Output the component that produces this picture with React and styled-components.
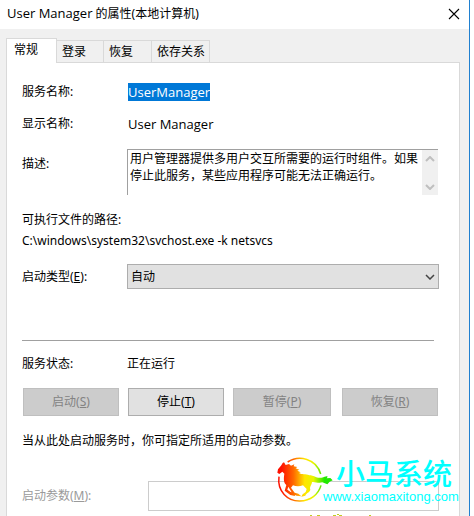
import React, { useState } from 'react'
import styled, { createGlobalStyle } from 'styled-components'

const GlobalStyle = createGlobalStyle`
  * {
    box-sizing: border-box;
  }
  body {
    margin: 0;
    background: #fff;
    overflow: hidden;
  }
  body, button, input, select, textarea {
    font-family: 'Noto Sans', 'Noto Sans CJK SC', sans-serif;
    font-size: 12px;
    line-height: 18px;
    color: #000;
  }
`
const Dialog = styled.main`
  display: flex;
  flex-direction: column;
  height: 100vh;
  margin-right: 4px;
  overflow: hidden;
  background: #f0f0f0;
  border-right: 1px solid #2080d0;
`
const TitleBar = styled.header`
  display: flex;
  justify-content: space-between;
  align-items: center;
  height: 29px;
  flex: none;
  padding: 0 9px 2px 7px;
  background: #fff;
`
const Title = styled.h1`
  margin: 0;
  font-size: 12px;
  line-height: 18px;
  font-weight: 400;
`
const CloseButton = styled.button`
  display: flex;
  padding: 0;
  border: none;
  background: none;
`
const TabList = styled.nav`
  display: flex;
  align-items: flex-end;
  height: 33px;
  flex: none;
  padding-left: 6px;
`
const Tab = styled.button`
  position: relative;
  flex: none;
  width: ${(props) => props.$width}px;
  height: ${(props) => (props.$active ? 25 : 22)}px;
  margin: 0 0 ${(props) => (props.$active ? -1 : 0)}px;
  padding: ${(props) => (props.$active ? '0 0 2px 7px' : '1px 0 0 5px')};
  text-align: left;
  white-space: nowrap;
  background: ${(props) => (props.$active ? '#fff' : '#f0f0f0')};
  border: 1px solid #d9d9d9;
  border-bottom: none;
  border-left-width: ${(props) => (props.$active ? 1 : 0)}px;
`
const Panel = styled.section`
  flex: 1;
  margin: 0 9px 0 6px;
  padding: 20px 20px 0 15px;
  background: #fff;
  border: 1px solid #d9d9d9;
  border-bottom: none;
`
const Row = styled.div`
  display: grid;
  grid-template-columns: 105px 1fr;
  align-items: center;
  margin-bottom: ${(props) => props.$gap || 0}px;
`
const Label = styled.label`
  color: ${(props) => (props.$disabled ? '#9a9a9a' : '#000')};
`
const DescriptionLabel = styled(Label)`
  align-self: start;
  padding-top: 6px;
`
const Latin = styled.span`
  font-family: 'Open Sans', sans-serif;
  font-size: 13px;
`
const Value = styled(Latin)`
  padding-left: 1px;
`
const Selected = styled.mark`
  color: #fff;
  background: #0078d7;
`
const Description = styled.div`
  display: flex;
  height: 46px;
  margin-right: 1px;
  border-top: 1px solid #a0a0a0;
  border-left: 1px solid #a0a0a0;
`
const DescriptionText = styled.textarea`
  flex: 1;
  min-width: 0;
  padding: 0 0 0 2px;
  border: none;
  outline: none;
  resize: none;
  overflow: hidden;
  line-height: 17px;
`
const ScrollBar = styled.div`
  display: flex;
  flex-direction: column;
  justify-content: space-between;
  align-items: center;
  width: 16px;
  padding: 6px 0 5px;
  background: #f0f0f0;
`
const PathBlock = styled.div`
  margin-bottom: 13px;
`
const PathLine = styled.p`
  margin: 0;
  line-height: 21px;
`
const SelectWrapper = styled.div`
  position: relative;
`
const StyledSelect = styled.select`
  display: block;
  width: 100%;
  height: 25px;
  padding: 0 3px;
  appearance: none;
  background: #e1e1e1;
  border: 1px solid #adadad;
  border-radius: 0;
`
const SelectArrow = styled.span`
  position: absolute;
  top: 10px;
  right: 4px;
  display: flex;
  pointer-events: none;
`
const Separator = styled.hr`
  margin: 51px 5px 14px 0;
  border: none;
  border-top: 1px solid #a0a0a0;
`
const ButtonRow = styled.div`
  display: flex;
  gap: 9px;
  padding: 0 1px;
  margin-bottom: 16px;
`
const ActionButton = styled.button`
  width: 96px;
  height: 28px;
  padding: 0;
  color: #000;
  background: #e1e1e1;
  border: 1px solid #adadad;

  &:disabled {
    color: #838383;
    background: #ccc;
    border-color: #bfbfbf;
  }

  &:nth-child(3) {
    width: 98px;
  }

  &:last-child {
    margin-left: auto;
  }
`
const Hint = styled.p`
  margin: 0 0 31px;
`
const ParamRow = styled.div`
  display: grid;
  grid-template-columns: 126px 1fr;
  align-items: center;
`
const ParamInput = styled.input`
  width: 100%;
  height: 30px;
  border: 1px solid #ccc;
  background: #fff;
`
const Watermark = styled.aside`
  position: absolute;
  right: 9px;
  bottom: 0;
  display: flex;
  width: 190px;
  height: 60px;
  pointer-events: none;
`
const HorseLogo = styled.svg`
  flex: none;
  margin-top: 1px;
`
const WatermarkText = styled.div`
  display: flex;
  flex-direction: column;
  margin-left: -10px;
  white-space: nowrap;
  color: #00ffff;
`
const Brand = styled.span`
  padding-left: 13px;
  font-family: 'Noto Sans CJK SC', sans-serif;
  font-size: 29px;
  font-weight: 500;
  line-height: 32px;
`
const SiteName = styled.span`
  font-family: 'Liberation Sans', sans-serif;
  font-size: 13px;
  line-height: 18px;
`
const CutMark = styled.svg`
  position: absolute;
  left: 34px;
  bottom: 0;
`

const tabs = [
  { id: 'general', title: '常规', width: 51 },
  { id: 'logon', title: '登录', width: 47 },
  { id: 'recovery', title: '恢复', width: 48 },
  { id: 'dependencies', title: '依存关系', width: 58 },
]

const actions = [
  { key: 'S', title: '启动', disabled: true },
  { key: 'T', title: '停止', disabled: false },
  { key: 'P', title: '暂停', disabled: true },
  { key: 'R', title: '恢复', disabled: true },
]

function Chevron({ up, color, width = 1.5 }) {
  return (
    <svg width="10" height="6" viewBox="0 0 10 6" fill="none" stroke={color} strokeWidth={width}>
      <path d={up ? 'M1 5L5 1L9 5' : 'M1 1L5 5L9 1'} />
    </svg>
  )
}

function Horse() {
  return (
    <HorseLogo width="58" height="46" viewBox="24 21 174 138">
      <defs>
        <linearGradient id="rainbow" gradientUnits="userSpaceOnUse" x1="30" y1="0" x2="196" y2="0">
          <stop offset="0.08" stopColor="#ff1000" />
          <stop offset="0.3" stopColor="#ff6a00" />
          <stop offset="0.5" stopColor="#ffe600" />
          <stop offset="0.66" stopColor="#e8f400" />
          <stop offset="0.86" stopColor="#20e800" />
        </linearGradient>
      </defs>
      <g fill="none" stroke="url(#rainbow)" strokeWidth="4.5">
        <path d="M62 36C96 14 148 26 161 72" />
        <path d="M36 80C30 124 62 154 99 153C130 152 154 134 162 106" />
      </g>
      <path
        fill="url(#rainbow)"
        d="M51 37L56 45L66 42L72 47L82 43L80 49L91 51L86 55L97 59L91 62L101 67L96 69C104 75 116 70 127 76C142 76 148 86 164 83C174 81 178 77 182 80L179 85L190 84L197 91L188 95L181 103L166 97C154 101 143 94 135 96C134 106 127 110 130 119C128 128 118 128 115 137L103 140L107 133L116 126L119 117L108 106C97 110 86 109 78 106L72 113L83 128L94 131L103 139L89 137L77 132L64 110L61 119L71 126L83 129L84 138L70 135L53 122L58 105C49 98 50 84 52 71L46 65L37 72L31 68L33 58L43 46L47 39Z"
      />
    </HorseLogo>
  )
}

function App() {
  const [activeTab, setActiveTab] = useState('general')

  return (
    <>
      <GlobalStyle />
      <Dialog>
        <TitleBar>
          <Title>
            <Latin>User Manager</Latin> 的属性(本地计算机)
          </Title>
          <CloseButton type="button" aria-label="关闭">
            <svg width="12" height="12" viewBox="0 0 12 12" stroke="#000" strokeWidth="1.1">
              <path d="M1 1L11 11M11 1L1 11" />
            </svg>
          </CloseButton>
        </TitleBar>
        <TabList>
          {tabs.map((tab) => (
            <Tab
              key={tab.id}
              type="button"
              $width={tab.width}
              $active={tab.id === activeTab}
              onClick={() => setActiveTab(tab.id)}
            >
              {tab.title}
            </Tab>
          ))}
        </TabList>
        <Panel>
          <Row $gap={14}>
            <span>服务名称:</span>
            <Value>
              <Selected>UserManager</Selected>
            </Value>
          </Row>
          <Row $gap={16}>
            <span>显示名称:</span>
            <Value>User Manager</Value>
          </Row>
          <Row $gap={14}>
            <DescriptionLabel htmlFor="description">描述:</DescriptionLabel>
            <Description>
              <DescriptionText
                id="description"
                readOnly
                value="用户管理器提供多用户交互所需要的运行时组件。如果停止此服务，某些应用程序可能无法正确运行。"
              />
              <ScrollBar>
                <Chevron up color="#bfbfbf" width={2} />
                <Chevron color="#bfbfbf" width={2} />
              </ScrollBar>
            </Description>
          </Row>
          <PathBlock>
            <PathLine>可执行文件的路径:</PathLine>
            <PathLine>C:\windows\system32\svchost.exe -k netsvcs</PathLine>
          </PathBlock>
          <Row>
            <Label htmlFor="startup">
              启动类型(<u>E</u>):
            </Label>
            <SelectWrapper>
              <StyledSelect id="startup" defaultValue="auto">
                <option value="auto">自动</option>
                <option value="manual">手动</option>
                <option value="disabled">禁用</option>
              </StyledSelect>
              <SelectArrow>
                <Chevron color="#444" />
              </SelectArrow>
            </SelectWrapper>
          </Row>
          <Separator />
          <Row $gap={15}>
            <span>服务状态:</span>
            <span>正在运行</span>
          </Row>
          <ButtonRow>
            {actions.map((action) => (
              <ActionButton key={action.key} type="button" disabled={action.disabled}>
                {action.title}(<u>{action.key}</u>)
              </ActionButton>
            ))}
          </ButtonRow>
          <Hint>当从此处启动服务时，你可指定所适用的启动参数。</Hint>
          <ParamRow>
            <Label htmlFor="params" $disabled>
              启动参数(<u>M</u>):
            </Label>
            <ParamInput id="params" type="text" disabled />
          </ParamRow>
        </Panel>
      </Dialog>
      <Watermark>
        <Horse />
        <WatermarkText>
          <Brand>小马系统</Brand>
          <SiteName>www.xiaomaxitong.com</SiteName>
        </WatermarkText>
        <CutMark width="64" height="2" viewBox="0 0 64 2" stroke="#c3cc20">
          <path d="M1 1.5H3M8 1.5H11M24 1.5H27M28 0.5H30M30 1.5H33M60 1.5H62" />
        </CutMark>
      </Watermark>
    </>
  )
}

export default App
